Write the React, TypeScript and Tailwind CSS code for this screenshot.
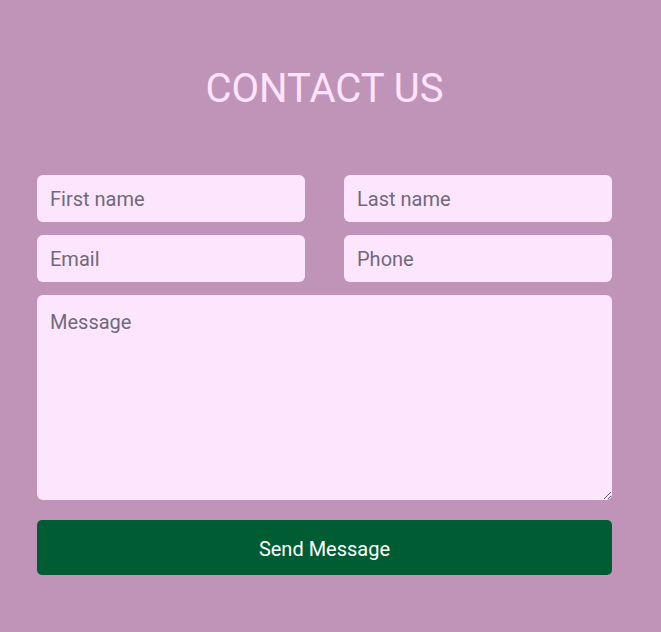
export default function App() {
  const field =
    'h-[47px] w-full rounded-md bg-[#fde6fd] px-[13px] text-[20px] text-gray-900 placeholder:text-[#6e6a7c] outline-none'

  return (
    <div className="min-h-[632px] w-full bg-[#c094b8] pt-[65px] font-['Roboto',sans-serif]">
      <div className="ml-[37px] w-[575px]">
        <h1 className="text-center text-[40px] font-normal leading-[48px] text-[#fde4fc]">CONTACT US</h1>

        <form className="mt-[62px] flex flex-col">
          <div className="grid grid-cols-2 gap-x-[39px] gap-y-[13px]">
            <input className={field} placeholder="First name" />
            <input className={field} placeholder="Last name" />
            <input className={field} placeholder="Email" />
            <input className={field} placeholder="Phone" />
          </div>
          <textarea
            className="mt-[13px] h-[205px] w-full rounded-md bg-[#fde6fd] px-[13px] pt-[15px] pb-[12px] text-[20px] leading-[24px] text-gray-900 placeholder:text-[#6e6a7c] outline-none"
            placeholder="Message"
          />
          <button
            type="button"
            className="mt-[20px] h-[55px] w-full rounded-[5px] bg-[#005c33] pt-[2px] text-[20px] text-white"
          >
            Send Message
          </button>
        </form>
      </div>
    </div>
  )
}
